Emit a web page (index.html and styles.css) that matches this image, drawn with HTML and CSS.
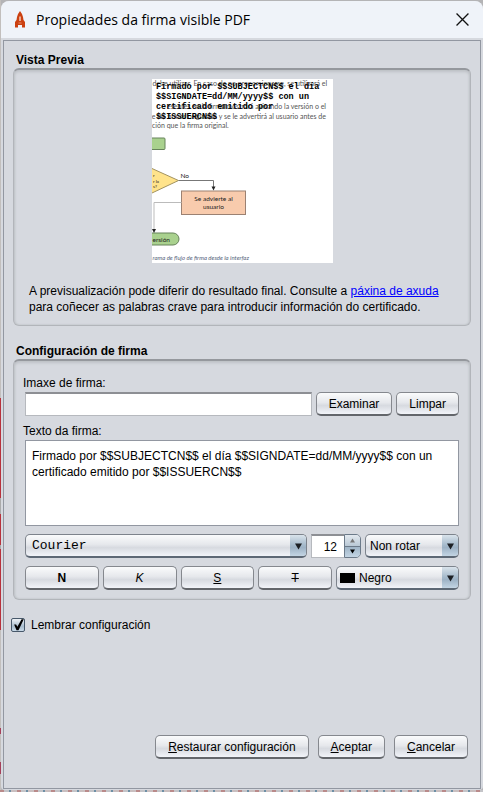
FILE: index.html
```html
<!DOCTYPE html>
<html lang="gl">
<head>
<meta charset="utf-8">
<title>Propiedades da firma visible PDF</title>
<link rel="stylesheet" href="styles.css">
</head>
<body>
<div class="window">
  <header class="titlebar">
    <svg class="logo" viewBox="0 0 20 34" aria-hidden="true">
      <path d="M10 0 14 6 16 12 17 18 20 22V33H14V28H6V33H0V22L3 18 4 12 6 6Z" fill="#cb4010"/>
      <path d="M10 11v9" stroke="#f3cdbd" stroke-width="3"/>
      <path d="M7 24h6" stroke="#e58a68" stroke-width="2"/>
    </svg>
    <h1 class="title">Propiedades da firma visible PDF</h1>
    <button class="close" type="button" aria-label="Pechar">
      <svg viewBox="0 0 12 12" aria-hidden="true"><path d="M0.5 0.5 11.5 11.5M11.5 0.5 0.5 11.5" stroke="#111" stroke-width="1.2" fill="none"/></svg>
    </button>
  </header>
  <form class="content">
    <section>
      <h2 class="group-title">Vista Previa</h2>
      <div class="panel preview-panel">
        <svg class="preview" viewBox="0 0 362 368" role="img" aria-label="Vista previa da firma">
          <rect width="362" height="368" fill="#fff"/>
          <g class="doc">
            <text x="1" y="13">debe utilizar. En caso de no proporcionarse, se utilizará el</text>
            <text x="348" y="60" text-anchor="end">esentes en la firma mostrará avisando la versión o el</text>
            <text x="348" y="79" text-anchor="end">da de las firmas originales y se le advertirá al usuario antes de</text>
            <text x="0" y="98">ción que la firma original.</text>
          </g>
          <g stroke-width="2">
            <rect x="-20" y="118" width="46" height="23" rx="2" fill="#a9d18e" stroke="#67835a"/>
            <path d="M-53 203 0 179 53 203 0 228Z" fill="#ffe38b" stroke="#a29260"/>
            <rect x="59" y="224" width="128" height="47" fill="#f8cbad" stroke="#9b8172"/>
            <rect x="-40" y="308" width="94" height="24" rx="12" fill="#a9d18e" stroke="#67835a"/>
            <path d="M53 203H123V218" fill="none" stroke="#777"/>
            <path d="M59 247H4V304" fill="none" stroke="#bbb"/>
          </g>
          <path d="M119 215h8l-4 8zM0 300h8l-4 8z" fill="#222"/>
          <g class="chart">
            <text x="57" y="198">No</text>
            <text x="123" y="243" text-anchor="middle">Se advierte al</text>
            <text x="123" y="260" text-anchor="middle">usuario</text>
            <text x="1" y="325">ersión</text>
            <text class="tiny" x="2" y="196">r</text>
            <text class="tiny" x="2" y="207">r la</text>
            <text class="tiny" x="2" y="218">s?</text>
          </g>
          <text class="caption" x="1" y="361">rama de flujo de firma desde la interfaz</text>
          <g class="sign">
            <text x="8" y="20">Firmado por $$SUBJECTCN$$ el día</text>
            <text x="8" y="40">$$SIGNDATE=dd/MM/yyyy$$ con un</text>
            <text x="8" y="60">certificado emitido por</text>
            <text x="8" y="80">$$ISSUERCN$$</text>
          </g>
        </svg>
        <p class="note">A previsualización pode diferir do resultado final. Consulte a <a href="#">páxina de axuda</a> para coñecer as palabras crave para introducir información do certificado.</p>
      </div>
    </section>
    <section>
      <h2 class="group-title">Configuración de firma</h2>
      <div class="panel config-panel">
        <label class="caption-label" for="image">Imaxe de firma:</label>
        <div class="row">
          <input class="field" id="image" type="text">
          <button class="btn" type="button">Examinar</button>
          <button class="btn" type="button">Limpar</button>
        </div>
        <label class="caption-label" for="text">Texto da firma:</label>
        <textarea class="area" id="text">Firmado por $$SUBJECTCN$$ el día $$SIGNDATE=dd/MM/yyyy$$ con un certificado emitido por $$ISSUERCN$$</textarea>
        <div class="row row-font">
          <div class="combo font-combo">
            <select aria-label="Tipo de letra"><option>Courier</option></select>
            <svg class="arrow" viewBox="0 0 8 8" aria-hidden="true"><path d="M0 1h8L4 8z"/></svg>
          </div>
          <div class="spinner">
            <input type="text" inputmode="numeric" value="12" aria-label="Tamaño">
            <div class="steps">
              <button type="button" aria-label="Aumentar"><svg viewBox="0 0 6 5" aria-hidden="true"><path d="M3 0 6 5H0z" fill="#777"/></svg></button>
              <button type="button" aria-label="Diminuír"><svg viewBox="0 0 6 5" aria-hidden="true"><path d="M0 0h6L3 5z"/></svg></button>
            </div>
          </div>
          <div class="combo">
            <select aria-label="Rotación"><option>Non rotar</option></select>
            <svg class="arrow" viewBox="0 0 8 8" aria-hidden="true"><path d="M0 1h8L4 8z"/></svg>
          </div>
        </div>
        <div class="row row-style">
          <button class="btn bold" type="button">N</button>
          <button class="btn italic" type="button">K</button>
          <button class="btn underline" type="button">S</button>
          <button class="btn strike" type="button">T</button>
          <div class="combo color-combo">
            <span class="swatch"></span>
            <select aria-label="Cor"><option>Negro</option></select>
            <svg class="arrow" viewBox="0 0 8 8" aria-hidden="true"><path d="M0 1h8L4 8z"/></svg>
          </div>
        </div>
      </div>
    </section>
    <label class="remember"><input type="checkbox" checked>Lembrar configuración</label>
    <footer class="actions">
      <button class="btn" type="button"><u>R</u>estaurar configuración</button>
      <button class="btn" type="button"><u>A</u>ceptar</button>
      <button class="btn" type="button"><u>C</u>ancelar</button>
    </footer>
  </form>
</div>
</body>
</html>
```
FILE: styles.css
```css
* { box-sizing: border-box; }

body {
  margin: 0;
  min-height: 100vh;
  display: flex;
  padding: 1px 0 2px 1px;
  font: 12px/16px "Liberation Sans", Arial, sans-serif;
  color: #000;
  background:
    repeating-linear-gradient(90deg, #b98a8a 0 4px, #c4c4c8 4px 9px, #6d8fa5 9px 11px, #c9bfc0 11px 17px) bottom / 100% 2px no-repeat,
    linear-gradient(#c2bfbd 398px, #b7323c 398px 498px, #aaa 498px 514px, #b7323c 514px 545px, #aaa 545px 549px, #b7323c 549px 630px, #c2bfbd 630px 728px, #a5405a 728px 734px, #c2bfbd 734px 762px, #a5405a 762px 774px, #c2bfbd 774px) left / 1px 100% no-repeat,
    #b4b4b6;
}

button, input, select, textarea { font: inherit; color: inherit; margin: 0; }

.window {
  flex: 1;
  display: flex;
  flex-direction: column;
  background: #d6d9df;
  border-radius: 8px 8px 4px 4px;
  overflow: hidden;
}

.titlebar {
  display: flex;
  align-items: center;
  height: 37px;
  padding: 0 14px;
  background: #eff3f9;
}

.logo { width: 10px; height: 17px; }

.title {
  flex: 1;
  margin: 0 0 0 11px;
  font: 14px/20px "Open Sans", "Noto Sans", sans-serif;
}

.close {
  display: flex;
  padding: 0;
  border: 0;
  background: none;
}

.close svg { width: 13px; height: 13px; }

.content {
  flex: 1;
  display: flex;
  flex-direction: column;
  margin: 2px 2px 1px;
  padding: 11px 9px 29px;
  border: 1px solid #9297a1;
}

.group-title {
  margin: 0 0 0 3px;
  font-size: 12px;
  line-height: 16px;
}

.panel {
  border: 1px solid #b2b5ba;
  border-top: 2px solid #95989d;
  border-radius: 6px;
  box-shadow: inset 0 2px 3px #bfc2c7, inset 1px 0 2px #c3c6cb, inset -1px 0 2px #c3c6cb;
}

.preview-panel {
  display: flex;
  flex-direction: column;
  margin-bottom: 17px;
  padding: 9px 15px 10px;
}

.preview { width: 181px; height: 184px; align-self: center; }

.doc { font: 14px Lato, sans-serif; fill: #555; }
.chart { font: 13px Lato, sans-serif; fill: #222; }
.tiny { font-size: 9px; }
.caption { font: italic 12px Lato, sans-serif; fill: #56647c; }
.sign { font: bold 17px "Liberation Mono", monospace; fill: #000; }

.note { margin: 20px 0 0; }
.note a { color: #00f; }

.config-panel { padding: 14px 11px 9px; }

.caption-label { display: block; margin-left: -2px; }

.row { display: flex; gap: 4px; margin: 1px 0 7px; }
.row-font { margin: 8px 0; }
.row-style { margin: 0; }

.field {
  flex: 1;
  min-width: 0;
  height: 24px;
  padding: 0 6px;
  border: 1px solid #b6b9be;
  border-top: 2px solid #8d8f94;
  background: #fff;
}

.area {
  display: block;
  width: 100%;
  height: 86px;
  margin-top: 1px;
  padding: 7px 6px;
  border: 1px solid #9297a1;
  background: #fff;
  resize: none;
}

.btn {
  height: 24px;
  padding: 0 12px;
  border: 1px solid #85888e;
  border-bottom: 2px solid #63666b;
  border-radius: 5px;
  background: linear-gradient(#fafbfc, #e6e8ec 45%, #d7dae0 60%, #f2f4f9);
  white-space: nowrap;
}

.row-style .btn { flex: 1; }
.bold { font-weight: bold; }
.italic { font-style: italic; }
.underline { text-decoration: underline; }
.strike { text-decoration: line-through; }

.combo {
  position: relative;
  display: flex;
  align-items: center;
  width: 94px;
  height: 24px;
  border: 1px solid #7d838c;
  border-bottom: 2px solid #5d6875;
  border-radius: 5px;
  overflow: hidden;
  background: linear-gradient(#fafbfc, #e6e8ec 45%, #d7dae0 60%, #f2f4f9);
}

.combo select {
  flex: 1;
  min-width: 0;
  height: 100%;
  padding: 0 20px 0 4px;
  border: 0;
  appearance: none;
  background: linear-gradient(#d9e3eb, #a3b8ca 50%, #9db2c5 60%, #c3d5e4) right / 16px 100% no-repeat;
}

.arrow {
  position: absolute;
  right: 4px;
  width: 7px;
  height: 8px;
  fill: #1c1f24;
  pointer-events: none;
}

.font-combo { flex: 1; }
.font-combo select { padding-left: 6px; font: 13px "Liberation Mono", monospace; }

.color-combo { width: 123px; }
.swatch { width: 15px; height: 10px; margin-left: 3px; background: #000; }

.spinner { display: flex; width: 50px; height: 24px; }

.spinner input {
  width: 33px;
  padding: 0 7px 0 0;
  border: 1px solid #b6b9be;
  border-top: 2px solid #8d8f94;
  border-right: 0;
  background: #fff;
  text-align: right;
}

.steps {
  flex: 1;
  display: flex;
  flex-direction: column;
  border: 1px solid #6c7a89;
  border-radius: 0 5px 5px 0;
  overflow: hidden;
}

.steps button {
  flex: 1;
  display: flex;
  align-items: center;
  justify-content: center;
  padding: 0;
  border: 0;
  background: linear-gradient(#e3e9ef, #b9c8d5);
}

.steps button + button {
  border-top: 1px solid #6c7a89;
  background: linear-gradient(#9fb4c6, #c3d5e4);
}

.steps svg { width: 5px; height: 5px; }

.remember {
  display: flex;
  align-items: center;
  gap: 6px;
  align-self: flex-start;
  margin: 17px 0 0 -2px;
}

.remember input {
  appearance: none;
  position: relative;
  width: 14px;
  height: 14px;
  border: 1px solid #47586a;
  border-radius: 2px;
  background: linear-gradient(#eef2f6, #a8bccd 60%, #c9dae8);
}

.remember input:checked::after {
  content: "";
  position: absolute;
  inset: 0 0 0 1px;
  background: #000;
  clip-path: polygon(10% 45%, 28% 45%, 40% 65%, 78% 3%, 98% 3%, 50% 94%, 32% 94%);
}

.actions {
  display: flex;
  justify-content: flex-end;
  gap: 9px;
  margin-top: auto;
  padding-right: 3px;
}
```
